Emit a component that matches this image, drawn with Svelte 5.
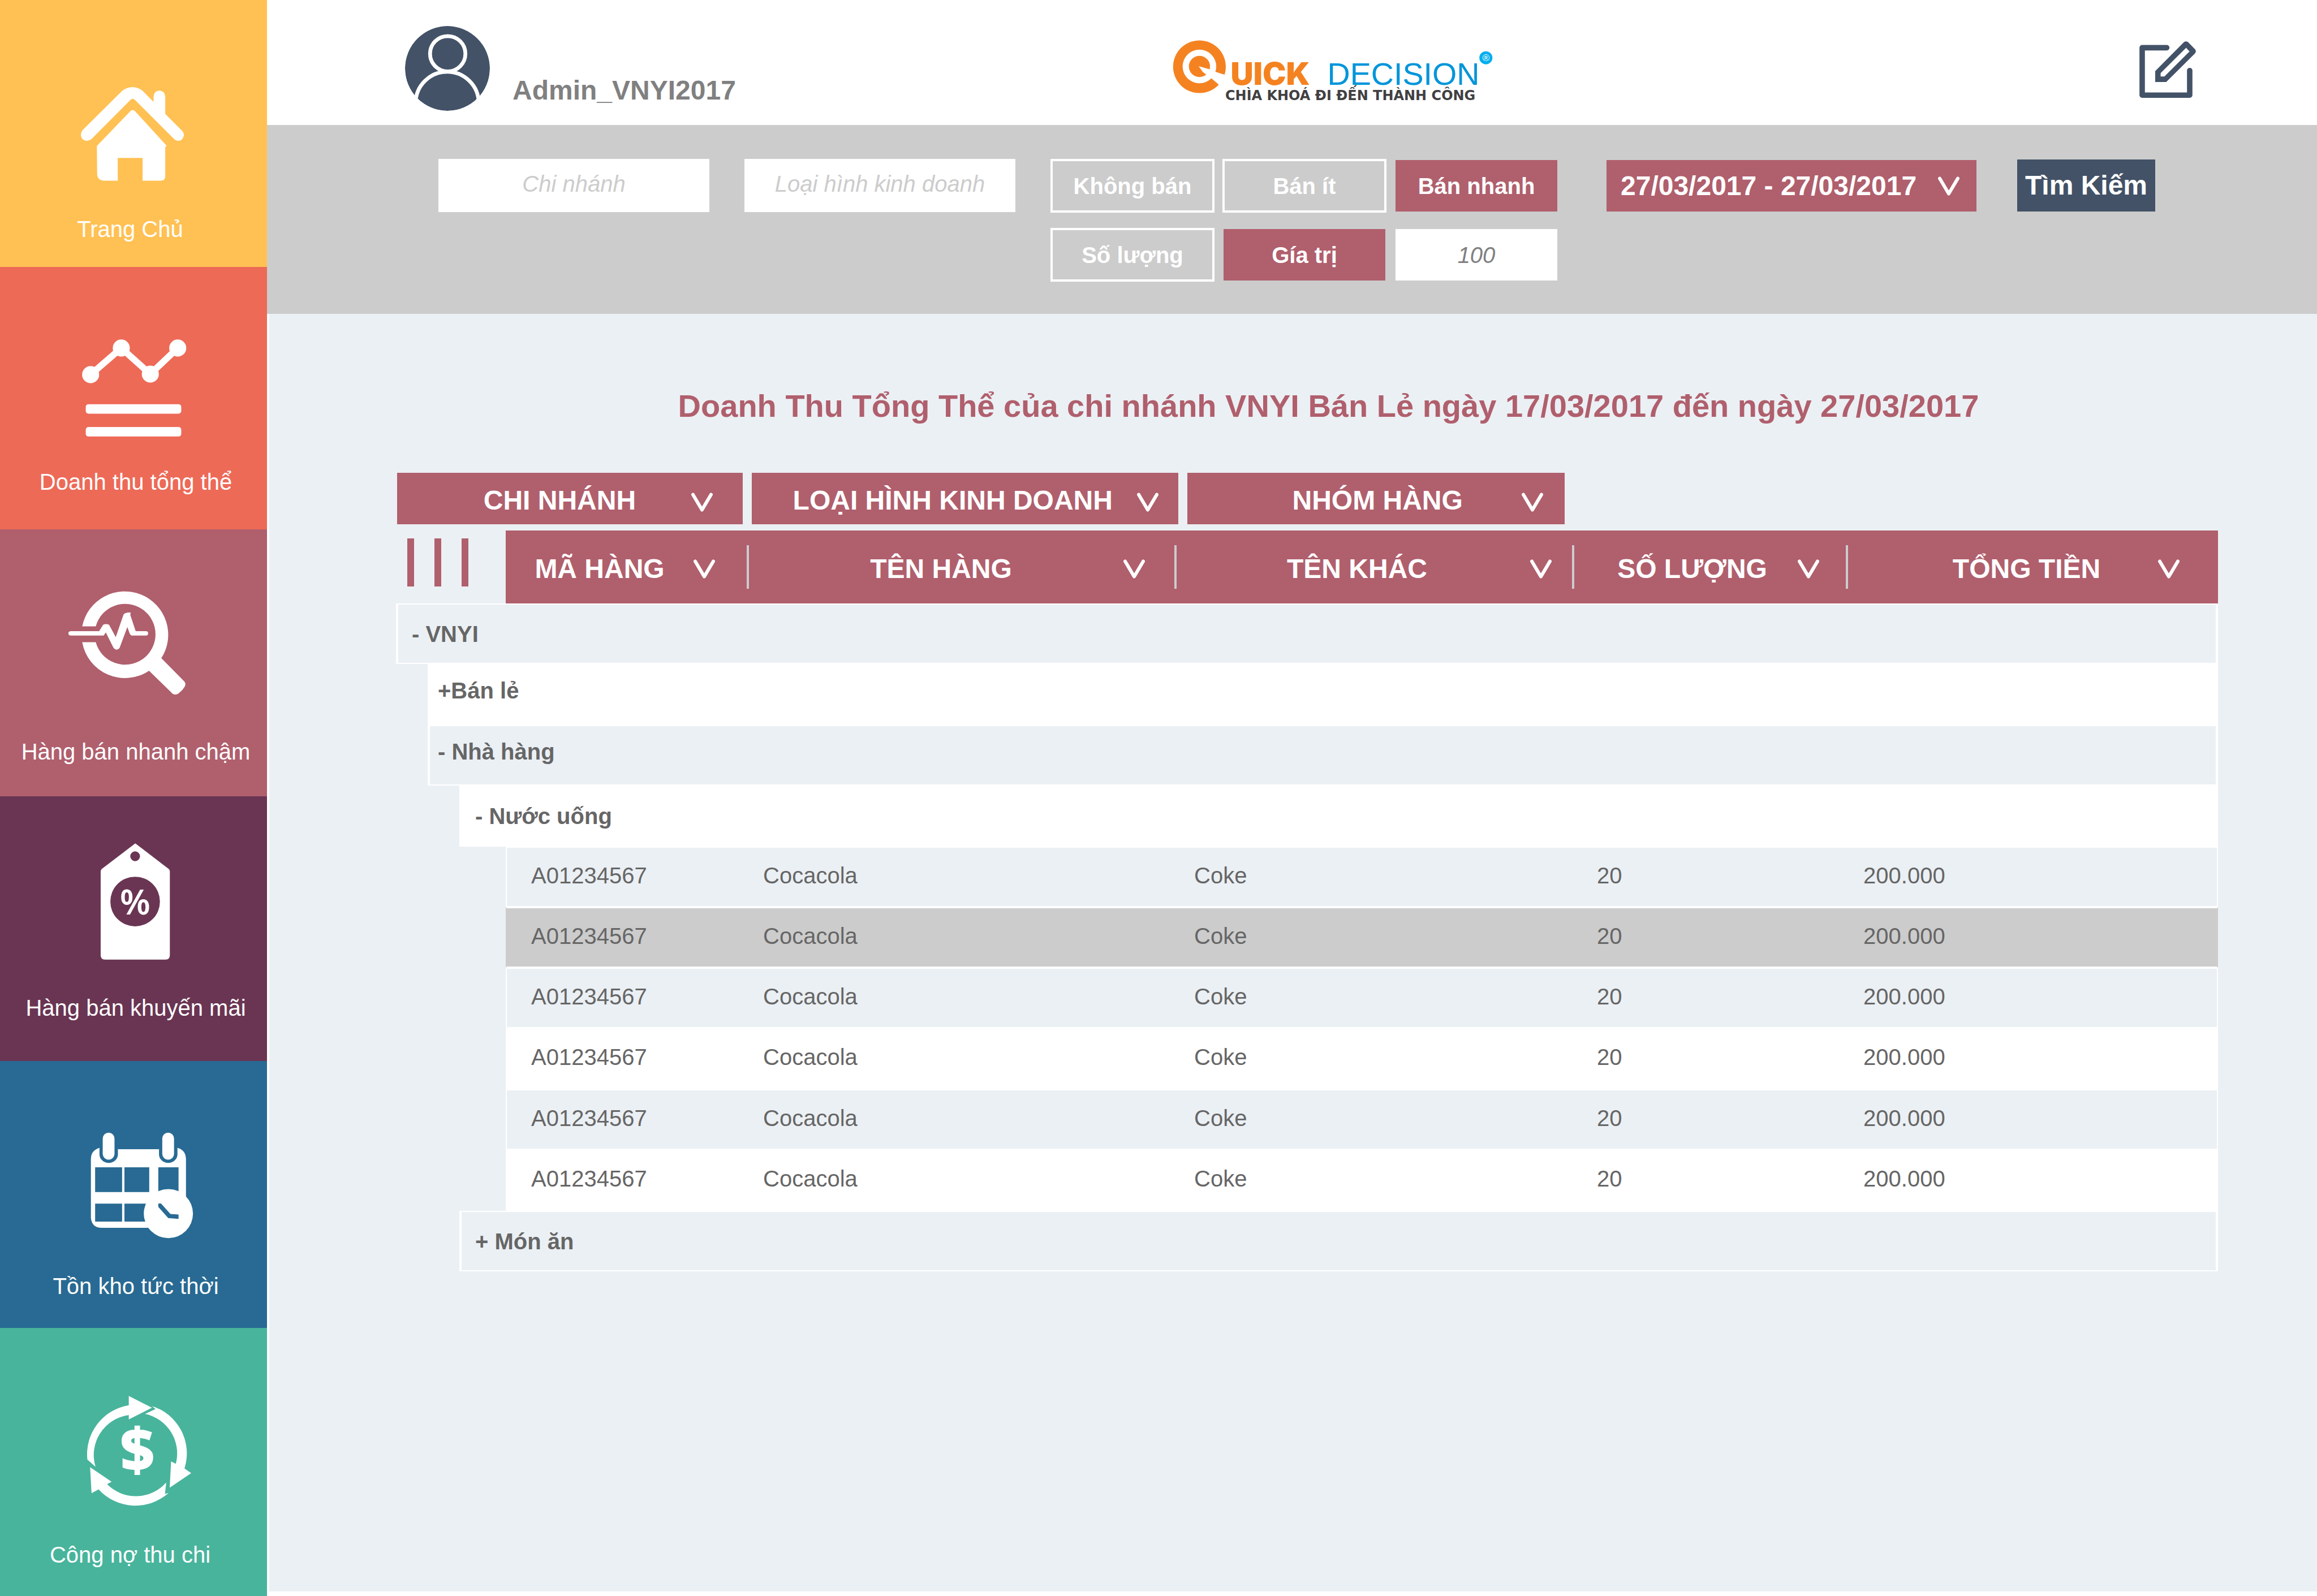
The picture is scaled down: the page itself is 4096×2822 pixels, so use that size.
<script>
  const menu = [
    { id: 'home', label: 'Trang Chủ', box: '0 0 492 397' },
    { id: 'revenue', label: 'Doanh thu tổng thể', box: '0 492 492 371' },
    { id: 'speed', label: 'Hàng bán nhanh chậm', box: '0 975 492 385' },
    { id: 'promo', label: 'Hàng bán khuyến mãi', box: '0 1467 492 365' },
    { id: 'stock', label: 'Tồn kho tức thời', box: '0 1954 492 390' },
    { id: 'debt', label: 'Công nợ thu chi', box: '0 2446 492 393' }
  ];

  const groupings = [
    { id: 'branch', label: 'CHI NHÁNH' },
    { id: 'kind', label: 'LOẠI HÌNH KINH DOANH' },
    { id: 'family', label: 'NHÓM HÀNG' }
  ];

  const columns = [
    { id: 'code', label: 'MÃ HÀNG' },
    { id: 'name', label: 'TÊN HÀNG' },
    { id: 'alias', label: 'TÊN KHÁC' },
    { id: 'amount', label: 'SỐ LƯỢNG' },
    { id: 'total', label: 'TỔNG TIỀN' }
  ];

  const tones = ['tint', 'picked', 'tint', 'plain', 'tint', 'plain'];
  const items = tones.map((tone) => ({
    tone,
    code: 'A01234567',
    name: 'Cocacola',
    alias: 'Coke',
    amount: '20',
    total: '200.000'
  }));

  let limit = $state('100');
</script>

{#snippet chevron()}
  <svg class="chevron" viewBox="0 0 38 34" aria-hidden="true">
    <path d="M3 3.500L19 30.500L35 3.500" />
  </svg>
{/snippet}

<div class="page">
  <nav class="sidebar">
    {#each menu as item (item.id)}
      <a class="tile {item.id}" href="#{item.id}">
        <svg viewBox={item.box} aria-hidden="true">
          {#if item.id === 'home'}
            <path d="M153 239L225 167.500Q234 160.500 244 160.500T263 167.500L283 188V178Q284 167 293.700 167T304.500 178V210L334 239.500Q339 244 339 249Q337 259.500 328 259.500Q324 259.500 321 256.500L249 184.500Q244.500 180 240 184.500L168.500 256.500Q165 259.500 160 259.500Q150 259 149 249Q149 244 153 239Z" />
            <path d="M178.500 269L240.500 204.500Q244.500 201 248.500 204.500L307 268.500L304.500 271.500V325Q304.500 333 296 333H262.700V291H217V333H193Q179 333 179 320Z" />
          {:else if item.id === 'revenue'}
            <path class="line" d="M167 690.500L223.500 641.500L277 689.500L327.500 641.500" />
            <circle cx="167" cy="690.500" r="15.700" />
            <circle cx="223.500" cy="641.500" r="15.700" />
            <circle cx="277" cy="689.500" r="15.700" />
            <circle cx="327.500" cy="641.500" r="15.700" />
            <rect x="158" y="745" width="176" height="17.500" rx="5" />
            <rect x="158" y="787" width="176" height="17.500" rx="5" />
          {:else if item.id === 'speed'}
            <path d="M151.500 1153.700A80 80 0 1 1 297.300 1212.500L340 1255.600Q343.500 1261 339.500 1266Q336 1272 331.700 1275Q327 1280 322 1279.500Q318 1279 315 1275L274.700 1235.600A80 80 0 0 1 151.500 1183H176.500A56 56 0 1 0 176.500 1153.700Z" />
            <path d="M130 1162.500H182.700L190 1151Q195 1148 201 1151L213.300 1173.700L227.700 1132Q231 1127.500 241 1128.500L240 1132.500L250 1162.500H269Q273 1162.500 273 1166.500T269 1170.600H242.300Q240 1169.500 239 1167L234.700 1155L220.300 1193.700Q215 1200 209.300 1193.700L195 1165L191 1170.600H130Q126 1170 126 1166.500T130 1162.500Z" />
          {:else if item.id === 'promo'}
            <path d="M249.300 1553.700L311 1601Q313 1603 313 1606V1760Q313 1768 305 1768H193.500Q185.500 1768 185.500 1760V1606Q185.500 1603 187.500 1601Z" />
            <circle class="hole" cx="249" cy="1577.500" r="9" />
            <circle class="hole" cx="249" cy="1661" r="45.700" />
            <text class="percent" x="249" y="1685">%</text>
          {:else if item.id === 'stock'}
            <path d="M183.300 2114Q167.500 2119 167.500 2134V2243Q169 2261.500 188 2261.500H342.700V2134Q342 2118 326.700 2114Z" />
            <path class="hole" d="M183.300 2110H217.300V2126A17 16 0 0 1 183.300 2126ZM293 2110H327V2126A17 16 0 0 1 293 2126Z" />
            <path class="hole" d="M217 2110H293V2116.700H217Z" />
            <rect x="189.300" y="2086" width="21.700" height="50" rx="10.800" />
            <rect x="299" y="2086" width="21.700" height="50" rx="10.800" />
            <path class="hole" d="M175.300 2150H225V2195.700H175.300ZM229.300 2150H275V2195.700H229.300ZM291.700 2150H329V2195.700H291.700ZM175.300 2217H225V2250H175.300ZM229.300 2217H275V2250H229.300Z" />
            <circle cx="310.300" cy="2235.300" r="45.300" />
            <path class="hole" d="M291.700 2216.800H296.700L314 2236L329 2237V2245L310 2243.600L291.700 2223Z" />
          {:else}
            <path d="M237.300 2571.400L280 2593L237.300 2614.700V2606.500A74.500 74.500 0 0 0 176 2702L161 2688.700A91.500 91.500 0 0 1 237.300 2588.500Z" />
            <path d="M267.300 2604.500L286.700 2595.600L280 2590A91.500 91.500 0 0 1 340 2705L352.300 2713.600L312.700 2740.400L315.300 2692L324 2696.400A74.500 74.500 0 0 0 267.300 2604.500Z" />
            <path d="M166 2702.800L205.700 2729.500L197.300 2734A74.500 74.500 0 0 0 306.300 2730.800L304 2751.900L310.700 2750A91.500 91.500 0 0 1 181.700 2743.600L168.700 2750.600Z" />
            <text class="dollar" x="253" y="2711">$</text>
          {/if}
        </svg>
        <span>{item.label}</span>
      </a>
    {/each}
  </nav>

  <div class="main">
    <header class="topbar">
      <div class="user">
        <svg viewBox="746 47 156 156" aria-hidden="true">
          <clipPath id="face"><circle cx="824" cy="125" r="78" /></clipPath>
          <g clip-path="url(#face)">
            <circle class="disc" cx="824" cy="125" r="78" />
            <circle class="outline" cx="824.500" cy="98" r="32.500" />
            <circle class="outline" cx="823.500" cy="189" r="58" />
          </g>
        </svg>
        <strong>Admin_VNYI2017</strong>
      </div>

      <a class="logo" href="#home" aria-label="Quick Decision">
        <svg viewBox="2155 60 600 135">
          <circle class="orange" cx="2208.500" cy="122.500" r="48.500" />
          <circle class="white" cx="2208.500" cy="122" r="31" />
          <circle class="orange" cx="2208.500" cy="122" r="19.500" />
          <path class="white" d="M2207 121.500L2228 127.500L2238 132L2262 139.500L2250 163L2243.600 155L2231.500 144.700L2215 132.500Z" />
          <text class="quick" x="2266" y="155.500">UICK</text>
          <text class="decision" x="2444" y="155.500">DECISION</text>
          <circle class="sky" cx="2736" cy="106" r="12" />
          <text class="mark" x="2736" y="112">®</text>
          <text class="slogan" x="2256" y="184">CHÌA KHOÁ ĐI ĐẾN THÀNH CÔNG</text>
        </svg>
      </a>

      <button class="edit" aria-label="Chỉnh sửa">
        <svg viewBox="180 110 312 313" aria-hidden="true">
          <path class="frame" d="M331 145.500H195V408H458V272" />
          <path d="M267 335V275L426 115Q438 106 449 115L487 154Q497 165 487 177L328 335ZM297 305H318L457 166L438 146L297 286Z" fill-rule="evenodd" />
        </svg>
      </button>
    </header>

    <form class="filters">
      <input class="field" type="text" placeholder="Chi nhánh" aria-label="Chi nhánh" />
      <input class="field" type="text" placeholder="Loại hình kinh doanh" aria-label="Loại hình kinh doanh" />
      <div class="toggles">
        <button type="button">Không bán</button>
        <button type="button">Bán ít</button>
        <button type="button" class="on">Bán nhanh</button>
        <button type="button">Số lượng</button>
        <button type="button" class="on">Gía trị</button>
        <input type="text" bind:value={limit} aria-label="Số dòng" />
      </div>
      <label class="drop period">
        <select aria-label="Khoảng thời gian">
          <option>27/03/2017 - 27/03/2017</option>
        </select>
        {@render chevron()}
      </label>
      <button type="button" class="search">Tìm Kiếm</button>
    </form>

    <main class="report">
      <h1>Doanh Thu Tổng Thể của chi nhánh VNYI Bán Lẻ ngày 17/03/2017 đến ngày 27/03/2017</h1>

      <div class="groupings">
        {#each groupings as g (g.id)}
          <label class="drop {g.id}">
            <select aria-label={g.label}>
              <option>{g.label}</option>
            </select>
            {@render chevron()}
          </label>
        {/each}
      </div>

      <table>
        <colgroup>
          <col class="w-step" />
          <col class="w-step" />
          <col class="w-gap" />
          {#each columns as c (c.id)}
            <col class="w-{c.id}" />
          {/each}
        </colgroup>
        <thead>
          <tr>
            <td class="corner" colspan="3">
              <button class="bars" aria-label="Chọn cột"><i></i><i></i><i></i></button>
            </td>
            {#each columns as c (c.id)}
              <th class={c.id} scope="col">
                <button><span>{c.label}</span>{@render chevron()}</button>
              </th>
            {/each}
          </tr>
        </thead>
        <tbody>
          <tr class="group tint"><td class="cell wide" colspan="8">- VNYI</td></tr>
          <tr class="group plain raised"><td></td><td class="cell" colspan="7">+Bán lẻ</td></tr>
          <tr class="group tint raised"><td></td><td class="cell" colspan="7">- Nhà hàng</td></tr>
          <tr class="group plain"><td colspan="2"></td><td class="cell wide" colspan="6">- Nước uống</td></tr>
          {#each items as item, i (i)}
            <tr class="item {item.tone}">
              <td colspan="3"></td>
              {#each columns as c (c.id)}
                <td class="cell {c.id}">{item[c.id]}</td>
              {/each}
            </tr>
          {/each}
          <tr class="group tint"><td colspan="2"></td><td class="cell wide" colspan="6">+ Món ăn</td></tr>
        </tbody>
      </table>
    </main>
  </div>
</div>

<style>
  :global(body) {
    margin: 0;
    background: #fff;
  }

  .page {
    --rose: #b05f6d;
    --navy: #435267;
    --mist: #ebf0f4;
    --grey: #ccc;
    display: flex;
    min-height: 100vh;
    font: 40px/48px 'Liberation Sans', Arial, sans-serif;
    color: #666;
  }

  .page :is(button, input, select) {
    box-sizing: border-box;
    margin: 0;
    padding: 0;
    border: 0;
    border-radius: 0;
    background: none;
    color: inherit;
    font: inherit;
    appearance: none;
  }

  .page svg {
    display: block;
  }

  /* Sidebar */
  .sidebar {
    flex: none;
    width: 472px;
    display: grid;
    grid-template-rows: 472fr 464fr 472fr 468fr 472fr 474fr;
  }

  .tile {
    background: var(--tone);
    color: #fff;
    text-align: center;
    text-decoration: none;
  }

  .tile svg {
    width: 100%;
    fill: #fff;
  }

  .tile span {
    display: block;
    padding-left: 8px;
    white-space: nowrap;
  }

  .tile.home span,
  .tile.debt span {
    padding: 0 12px 0 0;
  }

  .home { --tone: #ffc153; }
  .revenue { --tone: #ed6a57; }
  .speed { --tone: #b05f6d; }
  .promo { --tone: #6a3553; }
  .stock { --tone: #286a93; }
  .debt { --tone: #48b49c; }

  .hole {
    fill: var(--tone);
  }

  .line {
    fill: none;
    stroke: #fff;
    stroke-width: 12;
  }

  .percent {
    font: 600 64px 'Noto Sans', 'Open Sans', sans-serif;
    text-anchor: middle;
  }

  .dollar {
    font: 800 110px 'Open Sans', 'Noto Sans', sans-serif;
    text-anchor: middle;
  }

  /* Top bar */
  .main {
    flex: 1;
    min-width: 0;
    display: flex;
    flex-direction: column;
  }

  .topbar {
    box-sizing: border-box;
    height: 221px;
    padding: 24px 214px 0 244px;
    display: grid;
    grid-template-columns: 1353fr 1713fr 100px;
    align-items: center;
    background: #fff;
  }

  .user {
    display: flex;
    align-items: flex-end;
    gap: 40px;
    padding-bottom: 4px;
    color: #808080;
    font-size: 48px;
    line-height: 56px;
  }

  .user svg {
    width: 150px;
    height: 150px;
  }

  .user strong {
    margin-bottom: 8px;
  }

  .disc {
    fill: var(--navy);
  }

  .outline {
    fill: none;
    stroke: #fff;
    stroke-width: 7;
  }

  .logo svg {
    width: 576px;
  }

  .orange { fill: #f58220; }
  .white { fill: #fff; }
  .sky { fill: #00aeef; }

  .quick {
    font: 900 58px Inter, 'Liberation Sans', Arial, sans-serif;
    fill: #f58220;
  }

  .decision {
    font: 400 58px 'Liberation Sans', Arial, sans-serif;
    fill: #0095da;
  }

  .mark {
    font: 400 18px 'Liberation Sans', Arial, sans-serif;
    fill: #fff;
    text-anchor: middle;
  }

  .slogan {
    font: 700 25px 'DejaVu Sans', sans-serif;
    fill: #414042;
  }

  .edit svg {
    width: 100px;
    height: 100px;
    fill: var(--navy);
  }

  .frame {
    fill: none;
    stroke: var(--navy);
    stroke-width: 30;
    stroke-linecap: round;
    stroke-linejoin: round;
  }

  /* Filters */
  .filters {
    box-sizing: border-box;
    height: 334px;
    padding: 60px 286px 0 303px;
    display: flex;
    align-items: flex-start;
    background: var(--grey);
  }

  .filters .field {
    flex: 1 1 478px;
    min-width: 0;
    height: 94px;
    margin-right: 62px;
    padding-bottom: 6px;
    background: #fff;
    text-align: center;
    font-style: italic;
  }

  .field::placeholder {
    color: var(--grey);
    opacity: 1;
  }

  .toggles {
    display: grid;
    grid-template-columns: repeat(3, 290px);
    grid-auto-rows: 95px;
    gap: 27px 14px;
    margin-right: 85px;
  }

  .toggles button {
    border: 4px solid #fff;
    color: #fff;
    font-weight: 700;
  }

  .toggles .on,
  .toggles input {
    border: 2px solid transparent;
    background: var(--rose) padding-box;
  }

  .toggles input {
    min-width: 0;
    background-color: #fff;
    color: #808080;
    text-align: center;
    font-style: italic;
  }

  .drop {
    display: grid;
    align-items: center;
    background: var(--rose);
    color: #fff;
    font-size: 48px;
    font-weight: 700;
    line-height: 56px;
  }

  .drop select,
  .drop .chevron {
    grid-area: 1 / 1;
  }

  .drop select {
    width: 100%;
    height: 91px;
  }

  .drop option {
    color: #333;
  }

  .chevron {
    flex: none;
    width: 38px;
    height: 34px;
    justify-self: end;
    fill: none;
    stroke: #fff;
    stroke-width: 6;
    stroke-linecap: round;
    stroke-linejoin: round;
    pointer-events: none;
  }

  .period {
    flex: none;
    width: 654px;
    margin: 2px 72px 0 0;
  }

  .period select {
    padding-left: 25px;
  }

  .period .chevron {
    margin-right: 30px;
  }

  .filters .search {
    flex: none;
    width: 244px;
    height: 92px;
    margin-top: 1px;
    background: var(--navy);
    color: #fff;
    font-size: 48px;
    font-weight: 700;
    white-space: nowrap;
  }

  /* Report */
  .report {
    flex: 1;
    padding: 131px 175px 0 224px;
    border-left: 4px solid #fff;
    border-bottom: 8px solid #fff;
    background: var(--mist);
  }

  h1 {
    margin: 0 0 86px;
    padding-left: 76px;
    color: var(--rose);
    font-size: 56px;
    line-height: 64px;
    text-align: center;
  }

  .groupings {
    display: grid;
    grid-template-columns: 610fr 753fr 666fr 1138fr;
    column-gap: 16px;
    padding-left: 2px;
    margin-bottom: 11px;
  }

  .groupings select {
    padding-top: 6px;
    text-align: center;
    text-align-last: center;
  }

  .drop.branch select { padding-left: 54px; padding-right: 90px; }
  .drop.kind select { padding-left: 30px; padding-right: 73px; }
  .drop.family select { padding-left: 81px; padding-right: 75px; }
  .drop.branch .chevron { margin-right: 53px; }
  .drop.kind .chevron { margin-right: 35px; }
  .drop.family .chevron { margin-right: 38px; }
  .groupings .chevron { margin-top: 12px; }

  table {
    width: 100%;
    table-layout: fixed;
    border-collapse: separate;
    border-spacing: 0;
  }

  .w-step { width: 56px; }
  .w-gap { width: 82px; }
  .w-code { width: 430px; }
  .w-name { width: 756px; }
  .w-alias { width: 703px; }
  .w-amount { width: 484px; }
  .w-total { width: 654px; }

  th,
  td {
    padding: 0;
    text-align: left;
    font-weight: 400;
  }

  .corner {
    padding-left: 20px;
    vertical-align: top;
  }

  .page .bars {
    display: flex;
    gap: 36px;
    padding-top: 14px;
  }

  .bars i {
    width: 12px;
    height: 85px;
    background: var(--rose);
  }

  th {
    height: 129px;
    background: linear-gradient(var(--grey), var(--grey)) right center / 4px 77px no-repeat var(--rose);
    color: #fff;
    font-size: 48px;
    line-height: 56px;
  }

  th.total {
    background: var(--rose);
  }

  th button {
    width: 100%;
    display: flex;
    align-items: center;
  }

  .page th button {
    padding-top: 6px;
    font-weight: 700;
  }

  th span {
    flex: 1;
    text-align: center;
    white-space: nowrap;
  }

  .page th.code button { padding-right: 60px; }
  .page th.name button { padding-left: 17px; padding-right: 56px; }
  .page th.alias button { padding-left: 13px; padding-right: 40px; }
  .page th.amount button { padding-left: 22px; padding-right: 51px; }
  .page th.total button { padding-left: 83px; padding-right: 68px; }

  .cell {
    box-sizing: border-box;
    height: 107px;
    border: solid #fff;
    border-width: 2px 0;
    background: var(--mist);
  }

  .plain .cell {
    height: 108px;
    background: #fff;
  }

  .picked .cell { background: var(--grey); }

  .group .cell {
    border-width: 2px 4px;
    padding-left: 14px;
    font-weight: 700;
  }

  .group .wide { padding-left: 24px; }
  .raised .cell { padding-bottom: 14px; }

  .item .cell { padding-bottom: 6px; }
  .item .code { border-left-width: 2px; padding-left: 43px; }
  .item .name { padding-left: 25px; }
  .item .alias { padding-left: 31px; }
  .item .amount { padding-left: 40px; }
  .item .total { padding-left: 27px; border-right-width: 2px; }
  .picked .code { border-left-color: var(--grey); }
  .picked .total { border-right-color: var(--grey); }
</style>
